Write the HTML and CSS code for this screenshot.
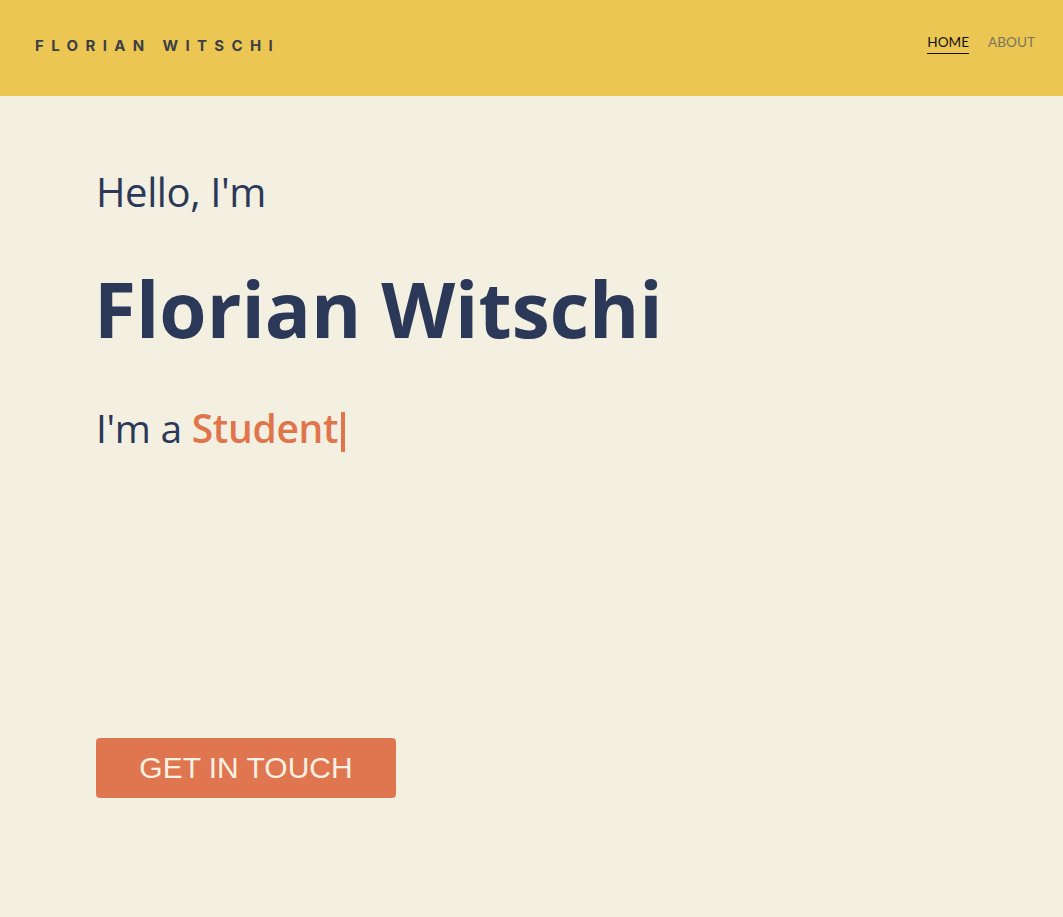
FILE: index.html
```html
<!DOCTYPE html>
<html lang="en">
<head>
<meta charset="utf-8">
<title>Florian Witschi</title>
<link rel="stylesheet" href="styles.css">
</head>
<body>
<header class="topbar">
  <div class="logo">FLORIAN WITSCHI</div>
  <nav class="nav">
    <a class="nav-link active" href="#">HOME</a>
    <a class="nav-link" href="#">ABOUT</a>
  </nav>
</header>
<main class="hero">
  <p class="hello">Hello, I'm</p>
  <h1 class="name">Florian Witschi</h1>
  <p class="role">I'm a <span class="accent">Student</span><span class="caret"></span></p>
  <a class="cta" href="#">GET IN TOUCH</a>
</main>
</body>
</html>
```
FILE: styles.css
```css
* { box-sizing: border-box; }
html, body { margin: 0; padding: 0; }
body {
  background: #f3f0e2;
  font-family: "Open Sans", "DejaVu Sans", sans-serif;
  color: #2b3857;
  min-height: 917px;
}
.topbar {
  height: 96px;
  background: #ecc652;
  display: flex;
  align-items: center;
  justify-content: space-between;
  padding: 0 28px 0 35px;
}
.logo {
  font-family: "Inter", "Liberation Sans", sans-serif;
  font-weight: 700;
  font-size: 15px;
  letter-spacing: 0.49em;
  color: #3d3f46;
  margin-top: -6px;
}
.nav {
  display: flex;
  gap: 19px;
  align-items: flex-start;
  margin-top: -8px;
}
.nav-link {
  font-family: "Lato", "Liberation Sans", sans-serif;
  font-size: 13.6px;
  text-decoration: none;
  color: #7b7560;
  padding-bottom: 3px;
  border-bottom: 1px solid transparent;
}
.nav-link.active {
  color: #111;
  border-bottom-color: #111;
}
.hero {
  padding: 0 96px;
  display: flex;
  flex-direction: column;
  align-items: flex-start;
}
.hello {
  margin: 71px 0 0;
  font-size: 40px;
  font-weight: 400;
  line-height: 50px;
  letter-spacing: -0.4px;
}
.name {
  margin: 46px 0 0 -2px;
  font-size: 76.5px;
  font-weight: 700;
  line-height: 90px;
  letter-spacing: 0;
}
.role {
  margin: 50px 0 0;
  font-size: 39px;
  line-height: 50px;
  letter-spacing: -0.3px;
  display: flex;
  align-items: center;
  white-space: pre;
}
.accent {
  color: #e0754c;
  font-weight: 600;
}
.caret {
  display: inline-block;
  width: 4px;
  height: 40px;
  background: #e0754c;
  margin-left: 3px;
  margin-top: 8px;
}
.cta {
  margin-top: 285px;
  width: 300px;
  height: 60px;
  background: #e0764f;
  border-radius: 4px;
  color: #f7f1e3;
  font-family: "Liberation Sans", Arial, sans-serif;
  font-size: 30px;
  text-decoration: none;
  display: flex;
  align-items: center;
  justify-content: center;
}
```
